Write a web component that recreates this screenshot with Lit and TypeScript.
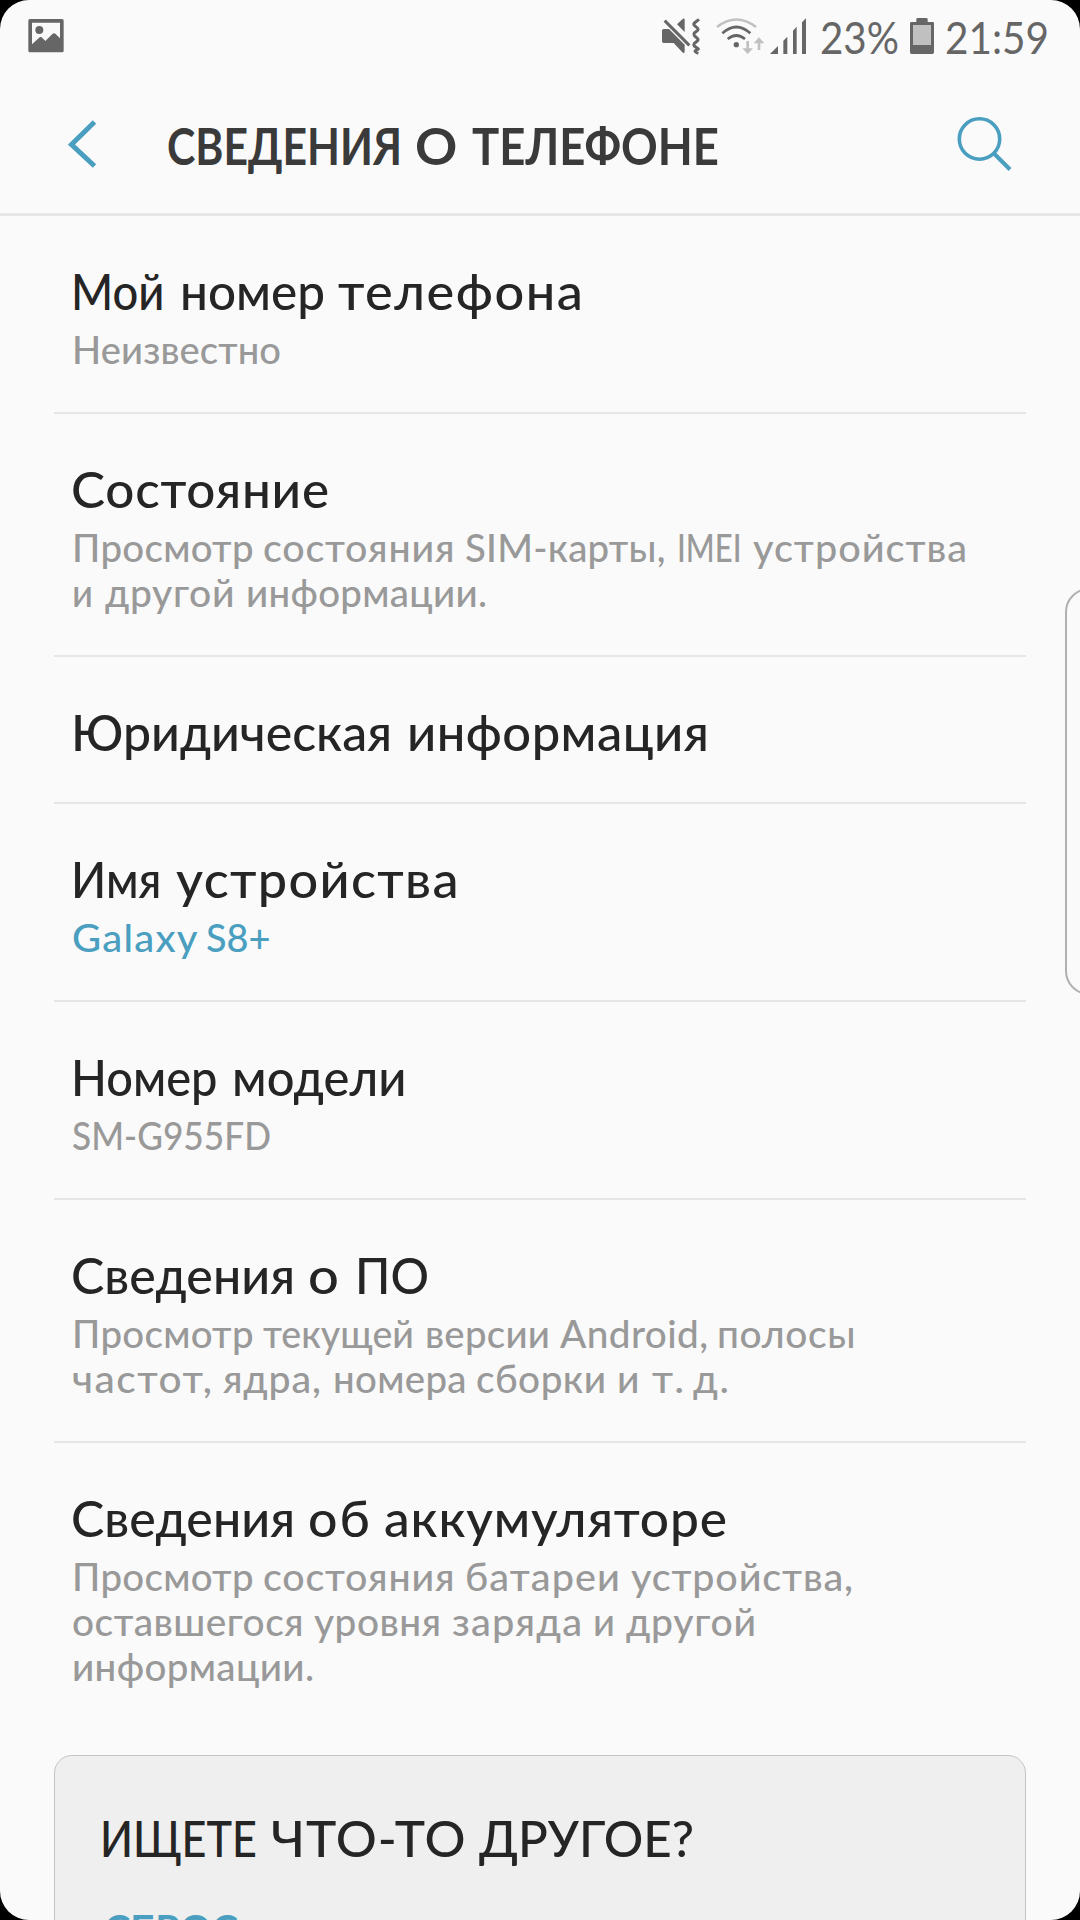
import { LitElement, html, css, svg, nothing } from "lit";
import { customElement, property } from "lit/decorators.js";

/** A word with the left and right edges it fills, in screen pixels. */
type Word = [text: string, left: number, right: number];
type Line = Word[];

interface Row {
  title: Line;
  lines?: Line[];
  accent?: boolean;
}

const rows: Row[] = [
  {
    title: [["Мой", 74, 161.5], ["номер", 183, 322], ["телефона", 341, 580]],
    lines: [[["Неизвестно", 74, 279]]],
  },
  {
    title: [["Состояние", 73, 325]],
    lines: [
      [["Просмотр", 74, 251.5], ["состояния", 265, 452.5], ["SIM-карты,", 467, 663.5], ["IMEI", 678.5, 739], ["устройства", 755, 965]],
      [["и", 74, 91], ["другой", 107, 232.5], ["информации.", 248, 485]],
    ],
  },
  { title: [["Юридическая", 75, 390], ["информация", 411, 707]] },
  {
    title: [["Имя", 74.5, 159], ["устройства", 179, 455.5]],
    lines: [[["Galaxy", 73.5, 195], ["S8+", 208, 268.5]]],
    accent: true,
  },
  {
    title: [["Номер", 74.5, 215], ["модели", 235, 403.5]],
    lines: [[["SM-G955FD", 73, 268]]],
  },
  {
    title: [["Сведения", 73, 291], ["о", 310, 337.5], ["ПО", 357, 425]],
    lines: [
      [["Просмотр", 74, 251.5], ["текущей", 265, 412], ["версии", 427, 548], ["Android,", 562, 706], ["полосы", 719, 853.5]],
      [["частот,", 73, 209], ["ядра,", 224, 318], ["номера", 333.5, 463], ["сборки", 477, 603], ["и", 618, 637], ["т.", 653, 681], ["д.", 694, 726]],
    ],
  },
  {
    title: [["Сведения", 73, 291], ["об", 310, 366], ["аккумуляторе", 386, 723]],
    lines: [
      [["Просмотр", 74, 251.5], ["состояния", 265, 452.5], ["батареи", 467, 618], ["устройства,", 633, 851]],
      [["оставшегося", 73, 300.5], ["уровня", 315.5, 438.5], ["заряда", 453, 579], ["и", 594, 612], ["другой", 627, 753]],
      [["информации.", 74, 312]],
    ],
  },
];

/** One line of text whose words are fitted to their own edges. */
@customElement("fitted-line")
export class FittedLine extends LitElement {
  @property({ attribute: false }) words: Line = [];
  /** Side bearing that surrounds each word's ink. */
  @property({ type: Number }) bearing = 3;

  static styles = css`
    :host { display: block; white-space: pre; }
    .word { display: inline-block; transform-origin: 0 50%; }
  `;

  firstUpdated() {
    this.fit();
    document.fonts?.ready.then(() => this.fit());
  }

  /** Narrow words are condensed; wide ones share the slack between glyphs and tracking. */
  private fit() {
    const words = this.renderRoot.querySelectorAll<HTMLElement>(".word");
    const spaces = this.renderRoot.querySelectorAll<HTMLElement>(".space");
    this.words.forEach(([text, left, right], i) => {
      const word = words[i];
      word.style.transform = "none";
      word.style.letterSpacing = "0px";
      word.style.marginRight = "0px";
      const target = right - left + 2 * this.bearing;
      const natural = word.getBoundingClientRect().width;
      const ratio = target / natural;
      const scale = ratio > 1 ? Math.sqrt(ratio) : ratio;
      const tracking = text.length > 1 ? (target / scale - natural) / (text.length - 1) : 0;
      word.style.letterSpacing = `${tracking}px`;
      word.style.transform = `scaleX(${scale})`;
      word.style.marginRight = `${target - natural - tracking * text.length}px`;
      if (i > 0) {
        const space = spaces[i - 1];
        space.style.letterSpacing = "0px";
        const gap = left - this.words[i - 1][2] - 2 * this.bearing;
        space.style.letterSpacing = `${gap - space.getBoundingClientRect().width}px`;
      }
    });
  }

  render() {
    return html`${this.words.map(
      ([text], i) => html`${i > 0 ? html`<span class="space"> </span>` : nothing}<span class="word">${text}</span>`
    )}`;
  }
}

const pictureIcon = svg`
  <path fill="#666" fill-rule="evenodd" d="M90 57H186Q191 57 191 62V152Q191 157 186 157H90Q85 157 85 152V62Q85 57 90 57ZM96 68V133L119 112Q122 110 125 112L136 123L158 101Q162 98 166 101L180 115V68Z"/>
  <circle cx="118" cy="90" r="12" fill="#666"/>`;

const muteIcon = svg`
  <path fill="#666" d="M71 87H87L134 134V154Q134 163 127 157L101 129H71Q66 129 66 124V92Q66 87 71 87ZM111 73L128 57Q134 53 134 60V96Z"/>
  <path fill="none" stroke="#666" stroke-width="9" d="M74 62L148 136"/>
  <path fill="none" stroke="#666" stroke-width="9" stroke-linejoin="round" d="M177 58L163 69Q160 73 163 76L172 84Q176 88 172 92L163 99Q160 103 163 107L172 115Q176 119 172 123L163 130Q160 134 163 138L175 147L168 151Q160 154 175 160"/>`;

const wifiIcon = svg`
  <g fill="none" stroke-width="8">
    <path stroke="#c0c0c0" d="M231 81Q289 36 348 81"/>
    <path stroke="#666" d="M247 100Q289 62 331 100"/>
    <path stroke="#666" d="M263 117Q289 96 315 117"/>
  </g>
  <circle cx="289" cy="134" r="8" fill="#666"/>
  <path fill="#c0c0c0" d="M319 123H327V145H339L323 162L307 145H319ZM353 150H361V130H373L357 112L341 130H353Z"/>`;

const signalIcon = svg`
  <path fill="#666" d="M390 162L414 138V162ZM430 162V122L442 110V162ZM459 162V92L470 80V162ZM486 162V67L498 55V162Z"/>`;

const batteryIcon = svg`
  <path fill="#666" d="M833 54H859Q863 54 863 58V66H878Q882 66 882 70V157Q882 162 877 162H815Q810 162 810 157V70Q810 66 814 66H829V58Q829 54 833 54Z"/>
  <path fill="#c0c0c0" d="M819 75H873V135H819Z"/>`;

@customElement("app-root")
export class AppRoot extends LitElement {
  static styles = css`
    :host {
      display: block;
      width: 1080px;
      height: 1920px;
      overflow: hidden;
      background: #000;
      font-family: Lato, "Open Sans", sans-serif;
      color: #252525;
    }
    * { box-sizing: border-box; }
    svg { display: block; flex: none; }
    .screen {
      position: relative;
      display: flex;
      flex-direction: column;
      width: 1080px;
      height: 1920px;
      overflow: hidden;
      background: #fafafa;
      border-radius: 29px;
    }
    .status {
      display: flex;
      align-items: flex-start;
      flex: none;
      height: 72px;
      padding: 16px 28px 0;
      color: #666;
      font-size: 45px;
      line-height: 54px;
    }
    .grow { flex: 1; }
    .wifi { margin-left: 13px; }
    .signal { margin-left: 5px; }
    .percent { margin: -6px 0 0 14px; width: 83px; }
    .battery { margin-left: 7px; }
    .clock { margin: -6px 0 0 11px; width: 107px; }
    .header {
      display: flex;
      align-items: center;
      flex: none;
      height: 144px;
      padding: 0 68px;
      border-bottom: 3px solid #e6e6e6;
    }
    .heading {
      margin: 4px 0 0 70px;
      font-size: 51.5px;
      line-height: 62px;
      font-weight: 700;
      color: #3a3a3a;
    }
    .row {
      margin: 0 54px;
      padding: 45px 16px 40px;
      border-bottom: 2px solid #e6e6e6;
    }
    .row:last-child { border-bottom: 0; }
    .title {
      font-size: 50px;
      line-height: 60px;
      font-weight: 500;
    }
    .row .title { margin-left: 1px; }
    .summary {
      margin: 6px 0 0 2px;
      font-size: 38px;
      line-height: 45px;
      font-weight: 500;
      color: #999;
    }
    .accent { color: #4a9fc0; }
    .card {
      flex: none;
      height: 220px;
      margin: 26px 54px 0;
      padding: 52px 45px 0;
      background: #efefef;
      border: 1px solid #c4c4c4;
      border-radius: 18px;
    }
    .link {
      margin: 33px 0 0 4px;
      font-size: 41px;
      line-height: 56px;
      font-weight: 700;
      color: #4a9fc0;
    }
    .handle {
      position: absolute;
      left: 1065px;
      top: 588px;
      width: 60px;
      height: 407px;
      border: 2px solid #b0b0b0;
      border-radius: 24px;
    }
  `;

  private line(words: Line, bearing: number) {
    return html`<fitted-line .words=${words} .bearing=${bearing}></fitted-line>`;
  }

  private row(r: Row) {
    return html`
      <section class="row">
        <div class="title">${this.line(r.title, 3)}</div>
        ${r.lines
          ? html`<div class="summary ${r.accent ? "accent" : ""}">${r.lines.map((l) => this.line(l, 2))}</div>`
          : nothing}
      </section>`;
  }

  render() {
    return html`
      <div class="screen">
        <div class="status">
          <svg width="36" height="39" viewBox="84 48 108 117">${pictureIcon}</svg>
          <div class="grow"></div>
          <svg width="42" height="39" viewBox="60 48 126 117">${muteIcon}</svg>
          <svg class="wifi" width="50" height="39" viewBox="225 48 150 117">${wifiIcon}</svg>
          <svg class="signal" width="36" height="39" viewBox="390 48 108 117">${signalIcon}</svg>
          <div class="percent">${this.line([["23%", 822, 899]], 1)}</div>
          <svg class="battery" width="24" height="39" viewBox="810 48 72 117">${batteryIcon}</svg>
          <div class="clock">${this.line([["21:59", 948, 1048]], 2)}</div>
        </div>
        <header class="header">
          <svg width="29" height="50" viewBox="0 0 29 50">
            <path d="M26.5 4L3.5 26.5L26.5 48" fill="none" stroke="#4a9fc0" stroke-width="5" />
          </svg>
          <div class="heading">
            ${this.line([["СВЕДЕНИЯ", 170, 401], ["О", 418, 457], ["ТЕЛЕФОНЕ", 475, 718]], 2)}
          </div>
          <div class="grow"></div>
          <svg width="56" height="56" viewBox="0 0 56 56">
            <circle cx="23.5" cy="24" r="20.2" fill="none" stroke="#4a9fc0" stroke-width="3.6" />
            <path d="M38 38.5L54 54.5" stroke="#4a9fc0" stroke-width="4" />
          </svg>
        </header>
        <main>${rows.map((r) => this.row(r))}</main>
        <section class="card">
          <div class="title">${this.line([["ИЩЕТЕ", 104, 255], ["ЧТО-ТО", 274.5, 463], ["ДРУГОЕ?", 483, 692]], 3)}</div>
          <div class="link">${this.line([["СБРОС", 108, 238]], 2)}</div>
        </section>
        <div class="handle"></div>
      </div>`;
  }
}
